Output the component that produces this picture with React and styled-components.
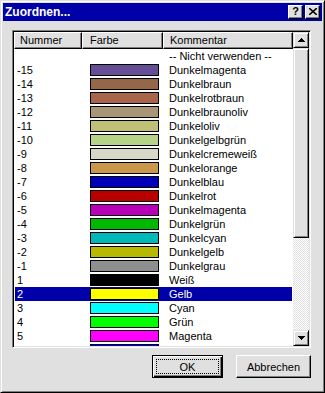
import React from "react";
import styled, { createGlobalStyle } from "styled-components";

const FACE = "#e0e0e0";
const SHADOW = "#808080";
const SEL = "#0000a8";

const Global = createGlobalStyle`
  html, body { margin: 0; padding: 0; background: ${FACE}; }
  * { box-sizing: border-box; }
  body { font-family: "Liberation Sans", Arial, sans-serif; font-size: 11px; color: #000; }
`;

const Window = styled.div`
  width: 325px;
  height: 393px;
  background: ${FACE};
  border: 1px solid;
  border-color: ${FACE} #000 #000 ${FACE};
  box-shadow: inset 1px 1px #fff, inset -1px -1px ${SHADOW};
  padding: 2px;
  display: flex;
  flex-direction: column;
`;

const TitleBar = styled.div`
  height: 18px;
  background: ${SEL};
  display: flex;
  align-items: center;
  padding: 0 2px 0 2px;
  gap: 2px;
`;

const Title = styled.div`
  flex: 1;
  color: #fff;
  font-weight: bold;
  font-size: 12px;
  line-height: 18px;
`;

const CapButton = styled.div`
  width: 15px;
  height: 14px;
  background: ${FACE};
  border: 1px solid;
  border-color: #fff #000 #000 #fff;
  box-shadow: inset -1px -1px ${SHADOW};
  display: flex;
  align-items: center;
  justify-content: center;
  font-weight: bold;
  font-size: 11px;
  line-height: 1;
  padding-bottom: 1px;
`;

const Body = styled.div`
  flex: 1;
  display: flex;
  flex-direction: column;
  padding: 9px 11px 12px 9px;
`;

const ListView = styled.div`
  height: 318px;
  border: 1px solid;
  border-color: ${SHADOW} #fff #fff ${SHADOW};
  box-shadow: inset 1px 1px #000, inset -1px -1px ${FACE};
  padding: 1px;
  display: flex;
  background: #fff;
`;

const ListMain = styled.div`
  width: 279px;
  display: flex;
  flex-direction: column;
  overflow: hidden;
`;

const Header = styled.div`
  display: grid;
  grid-template-columns: 68px 81px 130px;
  height: 17px;
  flex: none;
`;

const HeaderCell = styled.div`
  background: ${FACE};
  border: 1px solid;
  border-color: #fff #000 #000 #fff;
  box-shadow: inset -1px -1px ${SHADOW};
  padding-left: ${(p) => p.$pad}px;
  line-height: 14px;
  white-space: nowrap;
  overflow: hidden;
`;

const Rows = styled.div`
  flex: 1;
  overflow: hidden;
`;

const Row = styled.div`
  display: grid;
  grid-template-columns: 68px 81px 130px;
  height: 14px;
  background: ${(p) => (p.$selected ? SEL : "#fff")};
  color: ${(p) => (p.$selected ? "#fff" : "#000")};
  margin-right: 1px;
  margin-left: 1px;
`;

const Cell = styled.div`
  padding-left: ${(p) => p.$pad}px;
  line-height: 14px;
  white-space: nowrap;
  overflow: hidden;
`;

const Swatch = styled.div`
  margin-top: 1px;
  width: 69px;
  height: 12px;
  border: 1px solid #000;
`;

const ScrollBar = styled.div`
  width: 16px;
  display: flex;
  flex-direction: column;
`;

const ArrowButton = styled.div`
  width: 16px;
  height: 16px;
  flex: none;
  background: ${FACE};
  border: 1px solid;
  border-color: ${FACE} #000 #000 ${FACE};
  box-shadow: inset 1px 1px #fff, inset -1px -1px ${SHADOW};
  display: flex;
  align-items: center;
  justify-content: center;
`;

const Thumb = styled.div`
  height: 190px;
  flex: none;
  background: ${FACE};
  border: 1px solid;
  border-color: ${FACE} #000 #000 ${FACE};
  box-shadow: inset 1px 1px #fff, inset -1px -1px ${SHADOW};
`;

const Track = styled.div`
  flex: 1;
  background: repeating-conic-gradient(${FACE} 0 25%, #fff 0 50%) 0 0 / 2px 2px;
`;

const ButtonRow = styled.div`
  margin-top: 7px;
  display: flex;
  justify-content: flex-end;
  gap: 13px;
`;

const Button = styled.button`
  width: ${(p) => p.$w}px;
  height: 23px;
  font-family: "Liberation Sans", Arial, sans-serif;
  font-size: 11px;
  color: #000;
  background: ${FACE};
  padding: 0;
  position: relative;
  border: 1px solid;
  border-color: ${(p) => (p.$default ? "#000" : "#fff #000 #000 #fff")};
  box-shadow: ${(p) =>
    p.$default
      ? `inset 1px 1px #fff, inset -1px -1px #000, inset -2px -2px ${SHADOW}`
      : `inset -1px -1px ${SHADOW}`};
`;

const Focus = styled.span`
  position: absolute;
  inset: 3px;
  border: 1px dotted #000;
`;

const Label = styled.span`
  position: relative;
`;

const Tri = ({ down }) => (
  <svg width="7" height="4" viewBox="0 0 7 4">
    <path d={down ? "M0 0H7L3.5 4Z" : "M3.5 0L7 4H0Z"} fill="#000" shapeRendering="crispEdges" />
  </svg>
);

const rows = [
  { n: "", c: null, k: "-- Nicht verwenden --" },
  { n: "-15", c: "#654e96", k: "Dunkelmagenta" },
  { n: "-14", c: "#956748", k: "Dunkelbraun" },
  { n: "-13", c: "#a9654a", k: "Dunkelrotbraun" },
  { n: "-12", c: "#a89677", k: "Dunkelbraunoliv" },
  { n: "-11", c: "#bfbf77", k: "Dunkeloliv" },
  { n: "-10", c: "#b7d387", k: "Dunkelgelbgrün" },
  { n: "-9", c: "#d8d8c9", k: "Dunkelcremeweiß" },
  { n: "-8", c: "#c9984c", k: "Dunkelorange" },
  { n: "-7", c: "#0000b8", k: "Dunkelblau" },
  { n: "-6", c: "#b80000", k: "Dunkelrot" },
  { n: "-5", c: "#b800b8", k: "Dunkelmagenta" },
  { n: "-4", c: "#00b800", k: "Dunkelgrün" },
  { n: "-3", c: "#00b8b8", k: "Dunkelcyan" },
  { n: "-2", c: "#b8b800", k: "Dunkelgelb" },
  { n: "-1", c: "#8e8e8e", k: "Dunkelgrau" },
  { n: "1", c: "#000000", k: "Weiß" },
  { n: "2", c: "#ffff00", k: "Gelb", sel: true },
  { n: "3", c: "#00ffff", k: "Cyan" },
  { n: "4", c: "#00ff00", k: "Grün" },
  { n: "5", c: "#ff00ff", k: "Magenta" },
  { n: "", c: "#0000ff", k: "" },
];

export default function App() {
  return (
    <>
      <Global />
      <Window>
        <TitleBar>
          <Title>Zuordnen...</Title>
          <CapButton>?</CapButton>
          <CapButton>
            <svg width="8" height="7" viewBox="0 0 8 7">
              <path d="M0 0L8 7M8 0L0 7" stroke="#000" strokeWidth="1.6" />
            </svg>
          </CapButton>
        </TitleBar>
        <Body>
          <ListView>
            <ListMain>
              <Header>
                <HeaderCell $pad={5}>Nummer</HeaderCell>
                <HeaderCell $pad={7}>Farbe</HeaderCell>
                <HeaderCell $pad={6}>Kommentar</HeaderCell>
              </Header>
              <Rows>
                {rows.map((r, i) => (
                  <Row key={i} $selected={r.sel}>
                    <Cell $pad={2}>{r.n}</Cell>
                    <Cell $pad={7}>{r.c && <Swatch style={{ background: r.c }} />}</Cell>
                    <Cell $pad={5}>{r.k}</Cell>
                  </Row>
                ))}
              </Rows>
            </ListMain>
            <ScrollBar>
              <ArrowButton><Tri /></ArrowButton>
              <Thumb />
              <Track />
              <ArrowButton><Tri down /></ArrowButton>
            </ScrollBar>
          </ListView>
          <ButtonRow>
            <Button $w={71} $default>
              <Focus />
              <Label>OK</Label>
            </Button>
            <Button $w={75}>Abbrechen</Button>
          </ButtonRow>
        </Body>
      </Window>
    </>
  );
}
